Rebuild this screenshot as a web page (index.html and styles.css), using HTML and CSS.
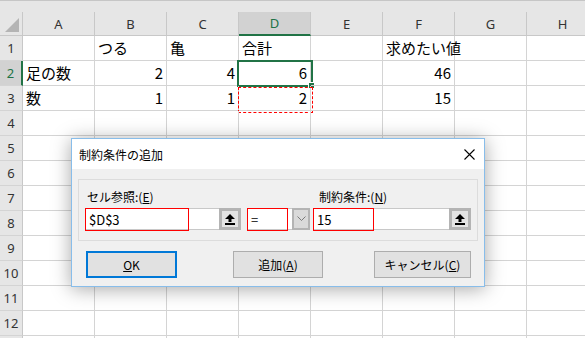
FILE: index.html
```html
<!DOCTYPE html>
<html>
<head>
  <title>制約条件の追加</title>
  <link rel="stylesheet" href="styles.css">
</head>
<body>
  <div class="topbar"></div>

  <div class="sheet">
    <div class="hd corner"><span class="tri"></span></div>
    <div class="hd col">A</div>
    <div class="hd col">B</div>
    <div class="hd col">C</div>
    <div class="hd col active-col">D</div>
    <div class="hd col">E</div>
    <div class="hd col">F</div>
    <div class="hd col">G</div>
    <div class="hd col">H</div>

    <div class="hd row">1</div>
    <div class="c"></div>
    <div class="c">つる</div>
    <div class="c">亀</div>
    <div class="c">合計</div>
    <div class="c"></div>
    <div class="c">求めたい値</div>
    <div class="c"></div>
    <div class="c"></div>

    <div class="hd row active-row">2</div>
    <div class="c">足の数</div>
    <div class="c num">2</div>
    <div class="c num">4</div>
    <div class="c num">6<span class="sel"><span class="handle"></span></span></div>
    <div class="c"></div>
    <div class="c num">46</div>
    <div class="c"></div>
    <div class="c"></div>

    <div class="hd row">3</div>
    <div class="c">数</div>
    <div class="c num">1</div>
    <div class="c num">1</div>
    <div class="c num">2<span class="marquee"></span></div>
    <div class="c"></div>
    <div class="c num">15</div>
    <div class="c"></div>
    <div class="c"></div>

    <div class="hd row">4</div>
    <div class="c"></div><div class="c"></div><div class="c"></div><div class="c"></div>
    <div class="c"></div><div class="c"></div><div class="c"></div><div class="c"></div>
    <div class="hd row">5</div>
    <div class="c"></div><div class="c"></div><div class="c"></div><div class="c"></div>
    <div class="c"></div><div class="c"></div><div class="c"></div><div class="c"></div>
    <div class="hd row">6</div>
    <div class="c"></div><div class="c"></div><div class="c"></div><div class="c"></div>
    <div class="c"></div><div class="c"></div><div class="c"></div><div class="c"></div>
    <div class="hd row">7</div>
    <div class="c"></div><div class="c"></div><div class="c"></div><div class="c"></div>
    <div class="c"></div><div class="c"></div><div class="c"></div><div class="c"></div>
    <div class="hd row">8</div>
    <div class="c"></div><div class="c"></div><div class="c"></div><div class="c"></div>
    <div class="c"></div><div class="c"></div><div class="c"></div><div class="c"></div>
    <div class="hd row">9</div>
    <div class="c"></div><div class="c"></div><div class="c"></div><div class="c"></div>
    <div class="c"></div><div class="c"></div><div class="c"></div><div class="c"></div>
    <div class="hd row">10</div>
    <div class="c"></div><div class="c"></div><div class="c"></div><div class="c"></div>
    <div class="c"></div><div class="c"></div><div class="c"></div><div class="c"></div>
    <div class="hd row">11</div>
    <div class="c"></div><div class="c"></div><div class="c"></div><div class="c"></div>
    <div class="c"></div><div class="c"></div><div class="c"></div><div class="c"></div>
    <div class="hd row">12</div>
    <div class="c"></div><div class="c"></div><div class="c"></div><div class="c"></div>
    <div class="c"></div><div class="c"></div><div class="c"></div><div class="c"></div>
    <div class="hd row"></div>
    <div class="c"></div><div class="c"></div><div class="c"></div><div class="c"></div>
    <div class="c"></div><div class="c"></div><div class="c"></div><div class="c"></div>
  </div>

  <div class="dialog">
    <div class="titlebar">
      <span>制約条件の追加</span>
      <svg class="close" width="11" height="11" viewBox="0 0 11 11">
        <path d="M0.5 0.5 L10.5 10.5 M10.5 0.5 L0.5 10.5" stroke="#000" stroke-width="1.1" fill="none"/>
      </svg>
    </div>

    <div class="dlg-body">
      <div class="group">
        <div class="fcol col-ref">
          <label class="lbl lbl-ref">セル参照:(<u>E</u>)</label>
          <div class="field">
            <span class="val">$D$3</span>
            <span class="mark mark-ref"></span>
            <span class="refbtn">
              <svg width="10" height="11" viewBox="0 0 10 11">
                <path d="M5 0 L10 5 H6.5 V8 H3.5 V5 H0 Z" fill="#000"/>
                <rect x="0" y="9" width="10" height="2" fill="#000"/>
              </svg>
            </span>
          </div>
        </div>

        <div class="fcol col-op">
          <label class="lbl">&nbsp;</label>
          <div class="combo">
            <span class="val">=</span>
            <span class="mark mark-op"></span>
            <span class="drop">
              <svg width="9" height="6" viewBox="0 0 9 6">
                <path d="M0.5 0.5 L4.5 4.5 L8.5 0.5" stroke="#7a7a7a" stroke-width="1" fill="none"/>
              </svg>
            </span>
          </div>
        </div>

        <div class="fcol col-con">
          <label class="lbl lbl-con">制約条件:(<u>N</u>)</label>
          <div class="field">
            <span class="val">15</span>
            <span class="mark mark-con"></span>
            <span class="refbtn">
              <svg width="10" height="11" viewBox="0 0 10 11">
                <path d="M5 0 L10 5 H6.5 V8 H3.5 V5 H0 Z" fill="#000"/>
                <rect x="0" y="9" width="10" height="2" fill="#000"/>
              </svg>
            </span>
          </div>
        </div>
      </div>

      <div class="buttons">
        <button class="btn btn-ok"><u>O</u>K</button>
        <button class="btn btn-add">追加(<u>A</u>)</button>
        <button class="btn btn-cancel">キャンセル(<u>C</u>)</button>
      </div>
    </div>
  </div>
</body>
</html>
```

FILE: styles.css
```css
body {
  margin: 0;
  width: 585px;
  height: 338px;
  overflow: hidden;
  background-color: #fff;
  font-family: "Noto Sans CJK JP", "Noto Sans", sans-serif;
  position: relative;
}

.topbar {
  height: 12px;
  box-sizing: border-box;
  background-color: #e6e6e6;
  border-top: 1px solid #c6c6c6;
}

.sheet {
  display: grid;
  grid-template-columns: 23px repeat(8, 72px);
  grid-template-rows: 24px repeat(13, 25px);
  font-size: 15px;
  color: #000;
}

.hd {
  box-sizing: border-box;
  background-color: #e6e6e6;
  border-right: 1px solid #c8c8c8;
  border-bottom: 1px solid #c8c8c8;
  color: #333;
  font-family: "Noto Sans", sans-serif;
  font-size: 13px;
  display: flex;
  align-items: center;
  justify-content: center;
}

.corner {
  position: relative;
}

.tri {
  position: absolute;
  right: 3px;
  bottom: 3px;
  width: 0;
  height: 0;
  border-left: 14px solid transparent;
  border-bottom: 14px solid #b4b4b4;
}

.hd.row {
  border-bottom-color: #d4d4d4;
}

.active-col {
  background-color: #d2d2d2;
  color: #217346;
  border-bottom: 2px solid #217346;
}

.active-row {
  background-color: #d2d2d2;
  color: #217346;
  border-right: 2px solid #217346;
}

.c {
  position: relative;
  box-sizing: border-box;
  border-right: 1px solid #d4d4d4;
  border-bottom: 1px solid #d4d4d4;
  padding: 0 3px;
  line-height: 24px;
  white-space: nowrap;
}

.num {
  text-align: right;
}

.sel {
  position: absolute;
  left: -2px;
  top: -1px;
  width: 76px;
  height: 27px;
  box-sizing: border-box;
  border: 2px solid #217346;
}

.handle {
  position: absolute;
  right: -4px;
  bottom: -4px;
  width: 7px;
  height: 7px;
  box-sizing: border-box;
  background-color: #217346;
  border: 1px solid #fff;
}

.marquee {
  position: absolute;
  left: -1px;
  top: 1px;
  width: 75px;
  height: 26px;
  box-sizing: border-box;
  border: 1px dashed #ff0000;
}

/* dialog */

.dialog {
  position: absolute;
  left: 71px;
  top: 138px;
  width: 414px;
  height: 149px;
  box-sizing: border-box;
  border: 1px solid #88bdea;
  background-color: #f0f0f0;
  box-shadow: 0 2px 18px rgba(0, 0, 0, 0.35);
  font-size: 12px;
  color: #000;
}

.titlebar {
  height: 30px;
  background-color: #fff;
  display: flex;
  align-items: center;
  justify-content: space-between;
  padding: 0 9px 0 7px;
}

.dlg-body {
  padding: 10px 0 0 6px;
}

.group {
  width: 400px;
  height: 62px;
  box-sizing: border-box;
  border: 1px solid #dcdcdc;
  padding-top: 8px;
  display: flex;
}

.fcol {
  display: flex;
  flex-direction: column;
}

.col-ref {
  margin-left: 6px;
  width: 156px;
}

.col-op {
  margin-left: 6px;
  width: 63px;
}

.col-con {
  margin-left: 3px;
  width: 158px;
}

.lbl {
  height: 20px;
  line-height: 18px;
  white-space: nowrap;
}

.lbl-ref {
  padding-left: 2px;
}

.lbl-con {
  padding-left: 6px;
}

.field,
.combo {
  position: relative;
  height: 22px;
  box-sizing: border-box;
  border: 1px solid #c8c8c8;
  background-color: #fff;
  display: flex;
  align-items: center;
}

.val {
  flex: 1;
  padding-left: 3px;
  font-size: 13px;
}

.mark {
  position: absolute;
  top: -1px;
  left: -1px;
  height: 23px;
  box-sizing: border-box;
  border: 1px solid #ff0000;
}

.mark-ref {
  width: 104px;
}

.mark-op {
  width: 41px;
}

.mark-con {
  width: 61px;
}

.refbtn {
  width: 22px;
  height: 22px;
  margin: -1px -1px -1px 0;
  box-sizing: border-box;
  border: 3px solid #b4b4b4;
  background-color: #e4e4e4;
  display: flex;
  align-items: center;
  justify-content: center;
}

.drop {
  width: 18px;
  height: 22px;
  margin: -1px -1px -1px 0;
  box-sizing: border-box;
  border: 2px solid #b4b4b4;
  background-color: #dadada;
  display: flex;
  align-items: center;
  justify-content: center;
}

.buttons {
  display: flex;
  margin-top: 10px;
  padding-left: 8px;
}

.btn {
  height: 27px;
  box-sizing: border-box;
  border: 1px solid #adadad;
  background-color: #e1e1e1;
  font-family: "Noto Sans CJK JP", "Noto Sans", sans-serif;
  font-size: 12px;
  color: #000;
  padding: 0;
}

.btn-ok {
  width: 91px;
  border: 2px solid #0078d7;
}

.btn-add {
  width: 90px;
  margin-left: 56px;
}

.btn-cancel {
  width: 97px;
  margin-left: 51px;
}
```
